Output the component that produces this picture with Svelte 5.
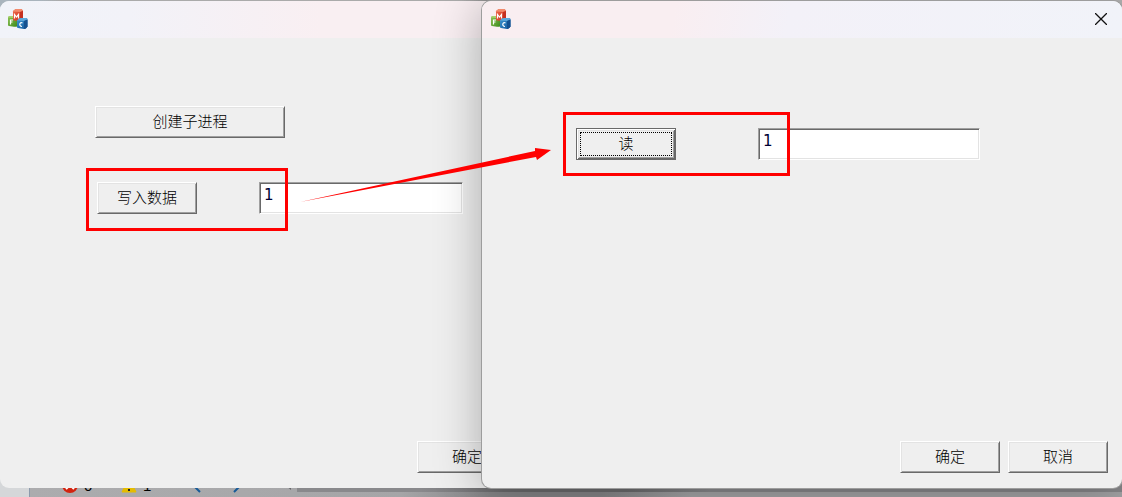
<script>
  let written = $state('1');
  let received = $state('1');

  function readData() {
    received = written;
  }
</script>

{#snippet logo()}
  <svg class="logo" viewBox="0 0 20 20" aria-hidden="true">
    <defs>
      <linearGradient id="red" x2="1" y2="1"><stop stop-color="#ee6a4c" /><stop offset="1" stop-color="#cc2f1c" /></linearGradient>
      <linearGradient id="green" x2="1" y2="1"><stop stop-color="#8fc455" /><stop offset="1" stop-color="#3d8a1b" /></linearGradient>
      <linearGradient id="blue" x2="1" y2="1"><stop stop-color="#3d96d0" /><stop offset="1" stop-color="#12569b" /></linearGradient>
    </defs>
    <path d="M0 8.500Q0 7 2 7h7v10.500Q8 18 6 17.800L1 17Q0 17 0 16z" fill="url(#green)" />
    <path d="M0 8.500Q0 7 2 7h6L5 9z" fill="#a8d36d" />
    <path d="M5 2.500Q5 1 8 0h5q2 1 2 2v8q-1 2-3 2l-6-.5Q5 11 5 10z" fill="url(#red)" />
    <path d="M5 2.500Q5 1 8 0h5q2 1 2 2l-3 1z" fill="#f28a6c" />
    <path d="m12 3 3-1v8q-1 2-3 2z" fill="#c5301f" />
    <path d="M9 11.500Q11 9 13 9h5.500q1 1 1 2v6.500Q18 20 16 20l-6-1q-1 0-1-1z" fill="url(#blue)" />
    <path d="M9 11.500Q11 9 13 9h5.500q1 0 1 1.500L16 12z" fill="#5da9da" />
    <path d="m16 12 3.500-1.500v7Q18 20 16 20z" fill="#15508f" />
    <path d="M6.500 9.500V5.500L8.500 8 10.500 5.500v4M2.500 15.500v-4.500h2.500M2.500 13h2M14.500 14c-3-1.500-4 3-.5 3.500" fill="none" stroke="#fff" stroke-width="1.200" />
  </svg>
{/snippet}

<main class="desktop">
  <div class="backdrop-top"></div>
  <footer class="status">
    <svg class="error" viewBox="0 0 16 16" aria-hidden="true"><circle cx="8" cy="8" r="8" fill="#d3230f" /><path d="m4 4 8 8m0-8-8 8" stroke="#fff" stroke-width="2" /></svg>
    <span>0</span>
    <svg class="warning" viewBox="0 0 16 16" aria-hidden="true"><path d="m8 1 7 14H1z" fill="#e5bc00" stroke="#e5bc00" stroke-linejoin="round" /><path d="M8 5v5m0 2v2" stroke="#222" stroke-width="2" /></svg>
    <span class="count">1</span>
    <svg class="prev" viewBox="0 0 10 16" aria-hidden="true"><path d="M9 1 2 8l7 7" fill="none" stroke="#165a98" stroke-width="2" /></svg>
    <svg class="next" viewBox="0 0 10 16" aria-hidden="true"><path d="m1 1 7 7-7 7" fill="none" stroke="#165a98" stroke-width="2" /></svg>
    <svg class="scroll" viewBox="0 0 6 10" aria-hidden="true"><path d="M6 0v10L0 5z" fill="#66666a" /></svg>
    <div class="track"></div>
  </footer>

  <section class="window parent" aria-label="MFC">
    <header>{@render logo()}</header>
    <div class="body">
      <div class="row create"><button class="wide">创建子进程</button></div>
      <div class="row write">
        <button>写入数据</button>
        <input class="sender" aria-label="写入数据" bind:value={written} />
      </div>
      <div class="actions"><button>确定</button></div>
    </div>
  </section>

  <section class="window child" aria-label="MFC">
    <header>
      {@render logo()}
      <button class="close" aria-label="×"><svg viewBox="0 0 12 12" aria-hidden="true"><path d="m0 0 12 12M12 0 0 12" stroke="#111" stroke-width="1.300" /></svg></button>
    </header>
    <div class="body">
      <div class="row read">
        <button class="focused" onclick={readData}>读</button>
        <input class="receiver" aria-label="读" bind:value={received} />
      </div>
      <div class="actions"><button>确定</button><button>取消</button></div>
    </div>
  </section>

  <div class="mark mark-write"></div>
  <div class="mark mark-read"></div>
  <svg class="arrow" viewBox="0 0 252 56" aria-hidden="true"><path d="M0 55 235 4V1l16 2-14 10-1-3z" fill="#f00" /></svg>
</main>

<style>
  :global(body) { margin: 0; }
  .desktop {
    position: relative;
    display: flex;
    flex-direction: column;
    justify-content: space-between;
    min-height: 100vh;
    overflow: hidden;
    background: #a8a8aa;
    font: 300 15px/20px "Liberation Sans", "Noto Sans CJK SC", sans-serif;
    color: #000;
  }
  .backdrop-top {
    height: 12px;
    background: linear-gradient(90deg, #a9b4bd 0 40px, #aaa 60px calc(50% - 100px), #858585 calc(50% - 60px) calc(50% + 70px), #b4b4b4 calc(50% + 76px));
  }
  .status {
    display: flex;
    align-items: center;
    height: 24px;
    padding-left: 62px;
    background: linear-gradient(90deg, #d5d7d9 0 29px, #8c9aac 29px 30px, #acacae 30px, #a5a5a7 calc(50% - 160px), #858587 calc(50% - 70px) calc(50% + 40px), #a5a5a7 calc(50% + 130px));
  }
  .status svg { flex: none; }
  .error, .warning { width: 16px; height: 16px; }
  .status span { box-sizing: border-box; width: 36px; padding: 2px 0 0 6px; }
  .status .count { width: 42px; padding-left: 6px; }
  .warning { margin-left: 7px; }
  .prev, .next { width: 10px; height: 16px; margin-left: 12px; }
  .next { margin-left: 32px; }
  .scroll { width: 6px; height: 10px; margin: 0 6px 0 42px; }
  .track {
    flex: 1;
    align-self: flex-start;
    height: 19px;
    background: linear-gradient(90deg, #89898c 0 15%, #6b6b6d 25% 40%, #89898c 50%);
  }

  .window {
    position: absolute;
    top: 1px;
    bottom: 9px;
    display: flex;
    flex-direction: column;
    box-sizing: border-box;
    border-radius: 9px;
    background: #efefef;
    overflow: hidden;
  }
  .parent { left: 0; right: calc(50% - 79px); }
  .child {
    left: calc(50% - 79px);
    right: 0;
    box-shadow: 0 0 0 1px #9d9d9d, 0 4px 48px rgba(0, 0, 0, 0.3);
  }
  header {
    display: flex;
    align-items: center;
    justify-content: space-between;
    box-sizing: border-box;
    height: 37px;
    flex: none;
    padding: 0 15px 2px 8px;
    background: linear-gradient(90deg, #f1f3f9 0, #f2f2f8 20%, #f9eff2 50%, #f9eff2);
  }
  .child header {
    padding-left: 9px;
    background: linear-gradient(100deg, #f9eef1 30%, #f3f1f8 48%, #f1f3f9);
  }
  .logo { width: 20px; height: 20px; }
  .body { display: flex; flex: 1; flex-direction: column; padding: 68px 14px 15px 95px; }
  .child .body { padding: 90px 14px 15px 94px; }
  .row { display: flex; }
  .write { margin: 44px 0 0 2px; gap: 62px; }
  .read { gap: 82px; }
  .actions { display: flex; justify-content: flex-end; gap: 8px; margin-top: auto; }
  .parent .actions { padding-right: 109px; }

  button {
    flex: none;
    width: 100px;
    height: 32px;
    padding: 0;
    border: 1px solid;
    border-color: #fff #696969 #696969 #fff;
    border-radius: 0;
    background: #efefef;
    box-shadow: inset 1px 1px #e3e3e3, inset -1px -1px #a0a0a0;
    font: inherit;
    color: inherit;
  }
  .wide { width: 190px; }
  .focused {
    border-color: #696969;
    box-shadow: inset 1px 1px #fff, inset -1px -1px #696969, inset 2px 2px #e3e3e3, inset -2px -2px #a0a0a0;
    outline: 1px dotted #000;
    outline-offset: -5px;
  }
  .close { display: flex; width: 12px; height: 12px; border: 0; background: none; box-shadow: none; }
  .close svg { width: 12px; height: 12px; }

  input {
    box-sizing: border-box;
    height: 32px;
    padding: 0 4px 6px;
    border: 1px solid;
    border-color: #a0a0a0 #fff #fff #a0a0a0;
    border-radius: 0;
    background: #fff;
    box-shadow: inset 1px 1px #696969, inset -1px -1px #e3e3e3;
    font: 15px/20px "DejaVu Sans", "Noto Sans CJK SC", sans-serif;
    color: #000034;
  }
  .sender { width: 204px; }
  .receiver { width: 222px; }

  .mark { position: absolute; box-sizing: border-box; border: 3px solid #f00; pointer-events: none; }
  .mark-write { left: 86px; top: 168px; width: 202px; height: 63px; }
  .mark-read { left: calc(50% + 2px); top: 112px; width: 227px; height: 64px; }
  .arrow { position: absolute; left: 300px; top: 147px; width: 252px; height: 56px; pointer-events: none; }
</style>
